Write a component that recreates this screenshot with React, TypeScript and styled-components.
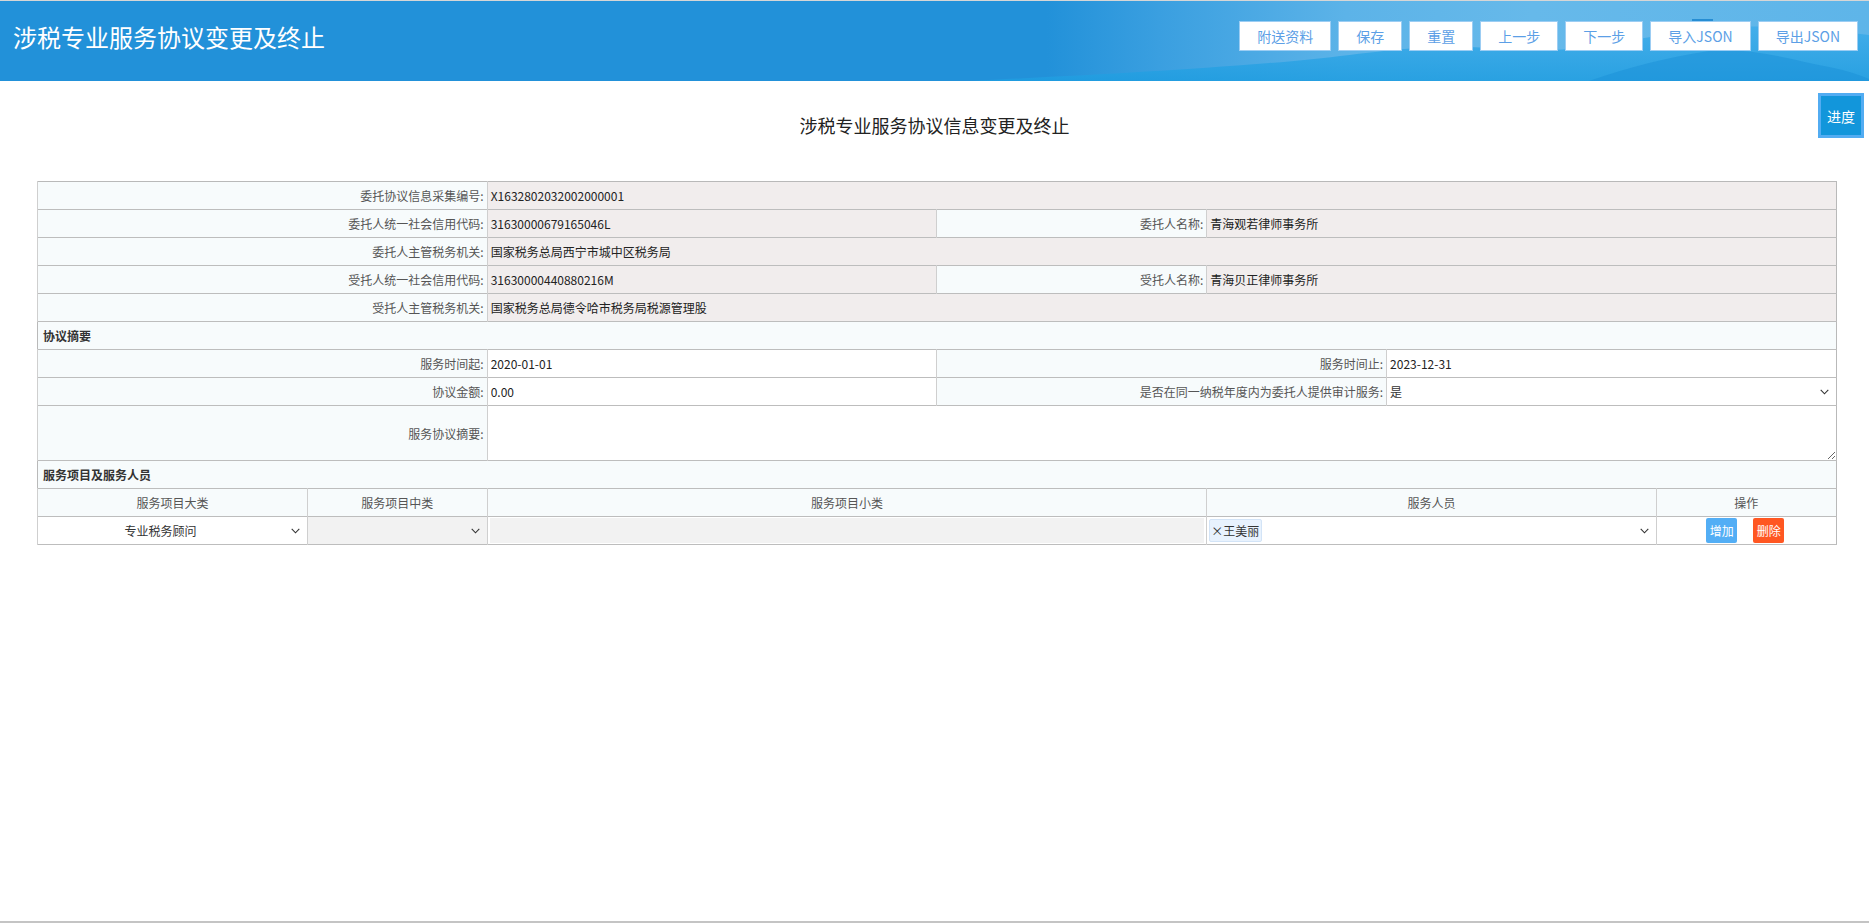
import React from "react";
import styled, { createGlobalStyle } from "styled-components";

const FONT = `"Noto Sans CJK SC", "Noto Sans", "Liberation Sans", sans-serif`;

const Global = createGlobalStyle`
  html, body { margin: 0; padding: 0; background: #fff; }
  body { font-family: ${FONT}; overflow: hidden; }
  * { box-sizing: border-box; }
`;

const Page = styled.div`
  position: relative;
  height: 923px;
  border-bottom: 2px solid #c4c4c4;
  display: flex;
  flex-direction: column;
`;

const Header = styled.header`
  position: relative;
  height: 81px;
  flex: none;
  border-top: 1px solid #d6d6d6;
  background: linear-gradient(
    90deg,
    #2291d9 0%,
    #2291d9 56%,
    #3a9fe0 62%,
    #5cb3e8 72%,
    #66b9ea 82%,
    #5eb5e9 100%
  );
  display: flex;
  align-items: center;
  justify-content: space-between;
  padding: 0 11px 0 13px;
  overflow: hidden;
`;

const Waves = styled.svg`
  position: absolute;
  right: 0;
  top: 0;
  width: 900px;
  height: 80px;
  pointer-events: none;
`;

const Title = styled.h1`
  position: relative;
  margin: -8px 0 0;
  font-size: 24px;
  font-weight: 400;
  color: #fff;
  line-height: 30px;
`;

const Toolbar = styled.div`
  position: relative;
  display: flex;
  gap: 7px;
  margin-top: -10px;
`;

const ToolButton = styled.button`
  height: 30px;
  padding: 0 17px;
  background: #fff;
  border: 1px solid #9ccdf3;
  color: #5c9fe6;
  font-family: ${FONT};
  font-size: 14px;
  line-height: 28px;
  cursor: pointer;
  white-space: nowrap;
`;

const ProgressButton = styled.button`
  position: absolute;
  right: 5px;
  top: 93px;
  width: 46px;
  height: 45px;
  padding: 0;
  background: #1296db;
  border: 3px solid #52acf2;
  color: #fff;
  font-family: ${FONT};
  font-size: 14px;
  cursor: pointer;
`;

const Content = styled.main`
  flex: 1;
  padding-top: 32px;
`;

const SubTitle = styled.h2`
  margin: 0 0 44px;
  text-align: center;
  font-size: 18px;
  font-weight: 400;
  line-height: 24px;
  color: #222;
`;

const Table = styled.table`
  width: 96.3%;
  margin: 0 0 0 37px;
  border-collapse: collapse;
  table-layout: fixed;
  font-size: 12px;
  border: 1px solid #b9b9b9;
`;

const Row = styled.tr<{ $tall?: boolean }>`
  height: ${(p) => (p.$tall ? "55px" : "28px")};
  border-bottom: 1px solid #bdbdbd;
`;

const Label = styled.td`
  padding: 0 3px 0 4px;
  background: #f7fbfc;
  color: #555;
  text-align: right;
  white-space: nowrap;
  border-left: 1px solid #cfcfcf;
  vertical-align: middle;
`;

const Value = styled.td<{ $white?: boolean }>`
  padding: 0 3px;
  background: ${(p) => (p.$white ? "#fff" : "#f1eded")};
  color: #222;
  text-align: left;
  white-space: nowrap;
  border-left: 1px solid #cfcfcf;
  vertical-align: middle;
`;

const Section = styled.td`
  padding: 0 5px;
  background: #f7fbfc;
  color: #333;
  font-weight: 700;
  text-align: left;
`;

const HeadCell = styled.td`
  background: #f7fbfc;
  color: #555;
  text-align: center;
  border-left: 1px solid #cfcfcf;
`;

const DataCell = styled.td<{ $gray?: boolean }>`
  padding: 0;
  background: ${(p) => (p.$gray ? "#f2f2f2" : "#fff")};
  border-left: 1px solid #cfcfcf;
  vertical-align: middle;
`;

const FieldInput = styled.input`
  width: 100%;
  border: none;
  outline: none;
  background: transparent;
  font-family: ${FONT};
  font-size: 12px;
  color: #222;
  padding: 0;
`;

const Summary = styled.textarea`
  display: block;
  width: 100%;
  height: 54px;
  border: none;
  outline: none;
  background: #fff;
  font-family: ${FONT};
  font-size: 12px;
  padding: 2px 3px;
  resize: both;
`;

const SelectBox = styled.div<{ $center?: boolean; $gray?: boolean }>`
  position: relative;
  display: flex;
  align-items: center;
  justify-content: ${(p) => (p.$center ? "center" : "flex-start")};
  height: 27px;
  padding: 0 24px 0 ${(p) => (p.$center ? "0" : "3px")};
  background: ${(p) => (p.$gray ? "#f2f2f2" : "transparent")};
  color: #333;
  font-size: 12px;
`;

const Chevron = styled.svg`
  position: absolute;
  right: 7px;
  top: 50%;
  width: 9px;
  height: 6px;
  margin-top: -3px;
`;

const GrayFill = styled.div`
  height: 25px;
  margin: 1px 2px;
  background: #f2f2f2;
`;

const Tag = styled.span`
  display: inline-flex;
  align-items: center;
  height: 23px;
  margin-left: -1px;
  padding: 0 2px 0 1px;
  background: #e8f2fd;
  border: 1px solid #d3e4f7;
  border-radius: 2px;
  color: #333;
  font-size: 12px;
`;

const Ops = styled.div`
  display: flex;
  justify-content: center;
  gap: 16px;
  padding-right: 2px;
`;

const OpButton = styled.button<{ $danger?: boolean }>`
  width: 31px;
  height: 25px;
  padding: 0;
  border: none;
  border-radius: 2px;
  background: ${(p) => (p.$danger ? "#ff5722" : "#53aef5")};
  color: #fff;
  font-family: ${FONT};
  font-size: 12px;
  cursor: pointer;
`;

const Down = () => (
  <Chevron viewBox="0 0 9 6">
    <polyline points="0.7,0.8 4.5,4.8 8.3,0.8" fill="none" stroke="#333" strokeWidth="1.1" />
  </Chevron>
);

const tools = ["附送资料", "保存", "重置", "上一步", "下一步", "导入JSON", "导出JSON"];

export default function App() {
  return (
    <>
      <Global />
      <Page>
        <Header>
          <Waves viewBox="0 0 900 80" preserveAspectRatio="none">
            <defs>
              <linearGradient id="sea" x1="0" y1="0" x2="0" y2="1">
                <stop offset="0" stopColor="#3eacea" />
                <stop offset="1" stopColor="#1f9de0" />
              </linearGradient>
            </defs>
            <path
              d="M0 80 C120 74 200 70 300 62 C360 58 400 50 460 46 C520 44 560 52 600 48 C660 42 700 30 760 26 C820 24 860 30 900 34 L900 80 Z"
              fill="url(#sea)"
              opacity="0.85"
            />
            <path
              d="M620 80 C660 66 700 56 740 50 C780 46 820 58 860 66 C880 70 890 74 900 78 L900 80 Z"
              fill="#1a8fd8"
              opacity="0.5"
            />
            <rect x="723" y="18" width="21" height="7" fill="#1c86cf" opacity="0.85" />
          </Waves>
          <Title>涉税专业服务协议变更及终止</Title>
          <Toolbar>
            {tools.map((t) => (
              <ToolButton key={t}>{t}</ToolButton>
            ))}
          </Toolbar>
        </Header>
        <ProgressButton>进度</ProgressButton>
        <Content>
          <SubTitle>涉税专业服务协议信息变更及终止</SubTitle>
          <Table>
            <colgroup>
              <col style={{ width: "15%" }} />
              <col style={{ width: "10%" }} />
              <col style={{ width: "25%" }} />
              <col style={{ width: "15%" }} />
              <col style={{ width: "10%" }} />
              <col style={{ width: "15%" }} />
              <col style={{ width: "10%" }} />
            </colgroup>
            <tbody>
              <Row>
                <Label colSpan={2}>委托协议信息采集编号:</Label>
                <Value colSpan={5}>X1632802032002000001</Value>
              </Row>
              <Row>
                <Label colSpan={2}>委托人统一社会信用代码:</Label>
                <Value>31630000679165046L</Value>
                <Label>委托人名称:</Label>
                <Value colSpan={3}>青海观若律师事务所</Value>
              </Row>
              <Row>
                <Label colSpan={2}>委托人主管税务机关:</Label>
                <Value colSpan={5}>国家税务总局西宁市城中区税务局</Value>
              </Row>
              <Row>
                <Label colSpan={2}>受托人统一社会信用代码:</Label>
                <Value>31630000440880216M</Value>
                <Label>受托人名称:</Label>
                <Value colSpan={3}>青海贝正律师事务所</Value>
              </Row>
              <Row>
                <Label colSpan={2}>受托人主管税务机关:</Label>
                <Value colSpan={5}>国家税务总局德令哈市税务局税源管理股</Value>
              </Row>
              <Row>
                <Section colSpan={7}>协议摘要</Section>
              </Row>
              <Row>
                <Label colSpan={2}>服务时间起:</Label>
                <Value $white>
                  <FieldInput defaultValue="2020-01-01" />
                </Value>
                <Label colSpan={2}>服务时间止:</Label>
                <Value $white colSpan={2}>
                  <FieldInput defaultValue="2023-12-31" />
                </Value>
              </Row>
              <Row>
                <Label colSpan={2}>协议金额:</Label>
                <Value $white>
                  <FieldInput defaultValue="0.00" />
                </Value>
                <Label colSpan={2}>是否在同一纳税年度内为委托人提供审计服务:</Label>
                <DataCell colSpan={2}>
                  <SelectBox>
                    是
                    <Down />
                  </SelectBox>
                </DataCell>
              </Row>
              <Row $tall>
                <Label colSpan={2}>服务协议摘要:</Label>
                <DataCell colSpan={5}>
                  <Summary />
                </DataCell>
              </Row>
              <Row>
                <Section colSpan={7}>服务项目及服务人员</Section>
              </Row>
              <Row>
                <HeadCell>服务项目大类</HeadCell>
                <HeadCell>服务项目中类</HeadCell>
                <HeadCell colSpan={2}>服务项目小类</HeadCell>
                <HeadCell colSpan={2}>服务人员</HeadCell>
                <HeadCell>操作</HeadCell>
              </Row>
              <Row>
                <DataCell>
                  <SelectBox $center>
                    专业税务顾问
                    <Down />
                  </SelectBox>
                </DataCell>
                <DataCell $gray>
                  <SelectBox $gray>
                    <Down />
                  </SelectBox>
                </DataCell>
                <DataCell colSpan={2}>
                  <GrayFill />
                </DataCell>
                <DataCell colSpan={2}>
                  <SelectBox>
                    <Tag>×王美丽</Tag>
                    <Down />
                  </SelectBox>
                </DataCell>
                <DataCell>
                  <Ops>
                    <OpButton>增加</OpButton>
                    <OpButton $danger>删除</OpButton>
                  </Ops>
                </DataCell>
              </Row>
            </tbody>
          </Table>
        </Content>
      </Page>
    </>
  );
}
